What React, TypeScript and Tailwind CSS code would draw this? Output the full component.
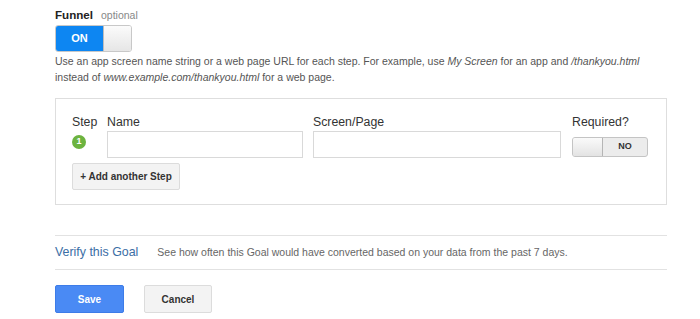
import React from 'react';

const font = { fontFamily: '"Liberation Sans", Arial, sans-serif' };

function OnToggle() {
  return (
    <div className="flex h-[27px] w-[77px] overflow-hidden rounded-[3px] border border-[#c8c8c8]">
      <div className="flex w-[47px] items-center justify-center bg-[#0d86f2] text-[11px] font-bold text-white">
        ON
      </div>
      <div className="flex-1 border-l border-[#bdbdbd] bg-gradient-to-b from-[#fbfbfb] to-[#e6e6e6]" />
    </div>
  );
}

function OffToggle() {
  return (
    <div className="flex h-[20px] w-[76px] overflow-hidden rounded-[3px] border border-[#c4c4c4] bg-[#ececec]">
      <div className="w-[30px] border-r border-[#b5b5b5] bg-gradient-to-b from-[#fafafa] to-[#e3e3e3]" />
      <div className="flex flex-1 items-center justify-center text-[9px] font-bold text-[#333]">NO</div>
    </div>
  );
}

export default function App() {
  return (
    <div className="h-[319px] w-[700px] bg-white pl-[55px] pt-[6px] text-[#333]" style={font}>
      <div className="flex h-[14px] items-baseline gap-[8px]">
        <span className="text-[11.6px] font-bold text-[#222]">Funnel</span>
        <span className="text-[10.5px] text-[#888]">optional</span>
      </div>
      <div className="mt-[5px]">
        <OnToggle />
      </div>
      <p className="mt-[1px] w-[612px] text-[10.5px] leading-[16px] text-[#555]">
        Use an app screen name string or a web page URL for each step. For example, use <i>My Screen</i> for an app
        and <i>/thankyou.html</i> instead of <i>www.example.com/thankyou.html</i> for a web page.
      </p>

      <div className="mt-[13px] h-[107px] w-[612px] border border-[#dedede] pl-[16px] pt-[15px]">
        <div className="flex">
          <div className="w-[35px]">
            <div className="h-[16px] text-[12.3px] leading-[16px] text-[#333]">Step</div>
            <div className="mt-[5px] flex h-[14px] w-[14px] items-center justify-center rounded-full bg-[#6cb33f] text-[9px] font-bold text-white">
              1
            </div>
          </div>
          <div className="w-[206px]">
            <div className="h-[16px] text-[12.3px] leading-[16px]">Name</div>
            <div className="mt-[1px] h-[27px] w-[196px] border border-[#d9d9d9] bg-white" />
          </div>
          <div className="w-[259px]">
            <div className="h-[16px] text-[12.3px] leading-[16px]">Screen/Page</div>
            <div className="mt-[1px] h-[27px] w-[248px] border border-[#d9d9d9] bg-white" />
          </div>
          <div>
            <div className="h-[16px] text-[12.3px] leading-[16px]">Required?</div>
            <div className="mt-[7px]">
              <OffToggle />
            </div>
          </div>
        </div>
        <button className="mt-[5px] flex h-[27px] w-[108px] items-center justify-center rounded-[2px] border border-[#dcdcdc] bg-[#f3f3f3] text-[10px] font-bold text-[#333]">
          + Add another Step
        </button>
      </div>

      <div className="mt-[30px] flex h-[35px] w-[612px] items-center border-y border-[#e2e2e2]">
        <span className="text-[12.4px] text-[#3b6ea5]">Verify this Goal</span>
        <span className="ml-[19px] text-[10.5px] text-[#666]">
          See how often this Goal would have converted based on your data from the past 7 days.
        </span>
      </div>

      <div className="mt-[15px] flex gap-[20px]">
        <button className="h-[28px] w-[69px] rounded-[2px] border border-[#3d7ce8] bg-[#4a8af4] text-[10px] font-bold text-white">
          Save
        </button>
        <button className="h-[28px] w-[68px] rounded-[2px] border border-[#dcdcdc] bg-[#f3f3f3] text-[10px] font-bold text-[#333]">
          Cancel
        </button>
      </div>
    </div>
  );
}
